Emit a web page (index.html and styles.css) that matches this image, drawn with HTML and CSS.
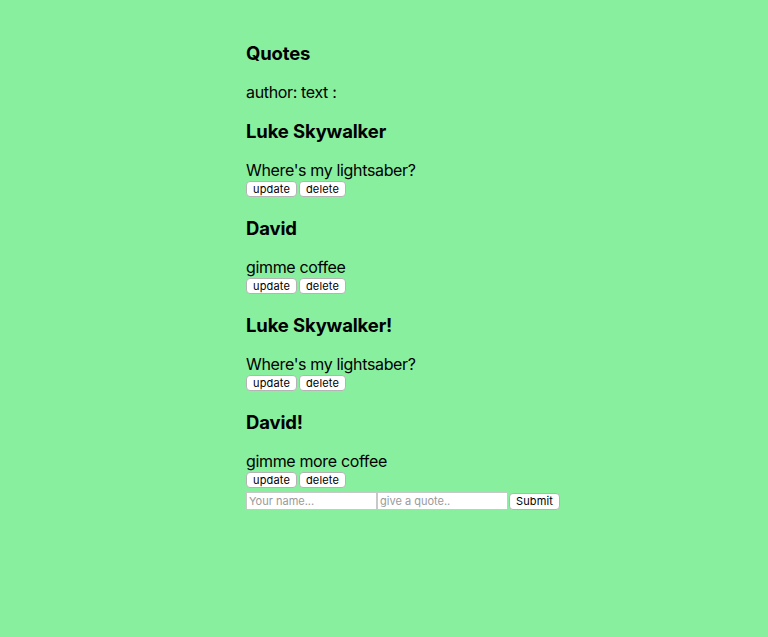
FILE: index.html
```html
<!DOCTYPE html>
<html>
<head>
<meta charset="utf-8">
<link rel="stylesheet" href="styles.css">
</head>
<body>
<div class="app">
  <h3 class="title">Quotes</h3>
  <p class="legend">author: text :</p>
  <div class="quote">
    <h3 class="author">Luke Skywalker</h3>
    <div class="text">Where's my lightsaber?</div>
    <div class="actions"><button class="btn">update</button><button class="btn">delete</button></div>
  </div>
  <div class="quote">
    <h3 class="author">David</h3>
    <div class="text">gimme coffee</div>
    <div class="actions"><button class="btn">update</button><button class="btn">delete</button></div>
  </div>
  <div class="quote">
    <h3 class="author">Luke Skywalker!</h3>
    <div class="text">Where's my lightsaber?</div>
    <div class="actions"><button class="btn">update</button><button class="btn">delete</button></div>
  </div>
  <div class="quote">
    <h3 class="author">David!</h3>
    <div class="text">gimme more coffee</div>
    <div class="actions"><button class="btn">update</button><button class="btn">delete</button></div>
  </div>
  <form class="form">
    <input class="field" type="text" placeholder="Your name..."><input class="field" type="text" placeholder="give a quote.."><button class="btn submit" type="button">Submit</button>
  </form>
</div>
</body>
</html>
```
FILE: styles.css
```css
html, body {
  margin: 0;
  padding: 0;
  background: #88ef9f;
}
body {
  font-family: Inter, "Noto Sans", sans-serif;
  color: #000;
  font-size: 16px;
  letter-spacing: -0.35px;
}
.app {
  padding: 42px 0 0 246px;
}
.title, .author {
  font-size: 18.5px;
  font-weight: 700;
  line-height: 22px;
  margin: 0 0 18px 0;
  letter-spacing: -0.15px;
}
.legend {
  margin: 0 0 18px 0;
  line-height: 20px;
}
.quote {
  margin-bottom: 20px;
}
.quote:last-of-type {
  margin-bottom: 0;
}
.text {
  line-height: 20px;
  margin-bottom: 1px;
}
.actions {
  display: flex;
  gap: 2px;
  height: 16px;
}
.btn {
  font-family: Inter, "Noto Sans", sans-serif;
  font-size: 11px;
  letter-spacing: 0.15px;
  height: 16px;
  padding: 0 6px;
  line-height: 14px;
  background: #fff;
  border: 1px solid #b4b4b4;
  border-radius: 4px;
  color: #000;
  margin: 0;
}
.form {
  display: flex;
  align-items: center;
  margin-top: 4px;
}
.field {
  width: 131px;
  height: 18px;
  box-sizing: border-box;
  border: 1px solid #c8c8c8;
  padding: 1px 2px;
  font-family: Inter, "Noto Sans", sans-serif;
  font-size: 11px;
  letter-spacing: 0;
  background: #fff;
  margin: 0;
}
.field::placeholder {
  color: #9a9a9a;
}
.submit {
  margin-left: 1px;
  padding: 0 6px;
  font-size: 11px;
  height: 17px;
}
```
